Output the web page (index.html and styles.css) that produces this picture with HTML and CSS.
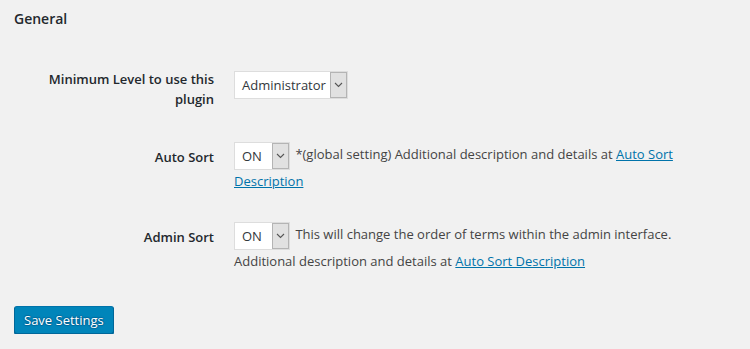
FILE: index.html
```html
<!DOCTYPE html>
<html>
<head>
<meta charset="utf-8">
<link rel="stylesheet" href="styles.css">
</head>
<body>
<div class="wrap">
  <h2 class="title">General</h2>
  <div class="form-table">
    <div class="row row-level">
      <div class="th">Minimum Level to use this plugin</div>
      <div class="td"><span class="select select-role">Administrator<span class="arrow"><svg width="9" height="6" viewBox="0 0 9 6"><path d="M1 1l3.5 3.5L8 1" fill="none" stroke="#555" stroke-width="1.1"/></svg></span></span></div>
    </div>
    <div class="row">
      <div class="th">Auto Sort</div>
      <div class="td"><span class="select select-onoff">ON<span class="arrow"><svg width="9" height="6" viewBox="0 0 9 6"><path d="M1 1l3.5 3.5L8 1" fill="none" stroke="#555" stroke-width="1.1"/></svg></span></span> *(global setting) Additional description and details at <a href="#">Auto Sort Description</a></div>
    </div>
    <div class="row">
      <div class="th">Admin Sort</div>
      <div class="td"><span class="select select-onoff">ON<span class="arrow"><svg width="9" height="6" viewBox="0 0 9 6"><path d="M1 1l3.5 3.5L8 1" fill="none" stroke="#555" stroke-width="1.1"/></svg></span></span> This will change the order of terms within the admin interface. Additional description and details at <a href="#">Auto Sort Description</a></div>
    </div>
  </div>
  <div class="submit">
    <button class="button-primary" type="button">Save Settings</button>
  </div>
</div>
</body>
</html>
```

FILE: styles.css
```css
html, body {
  margin: 0;
  padding: 0;
  background: #f1f1f1;
}
body {
  font-family: "Open Sans", "Noto Sans", sans-serif;
  font-size: 13px;
  color: #444;
}
.wrap {
  padding: 0 20px 0 14px;
}
.title {
  margin: 0;
  padding-top: 9px;
  font-size: 14px;
  line-height: 20px;
  font-weight: 600;
  color: #23282d;
}
.form-table {
  margin-top: 31px;
  display: flex;
  flex-direction: column;
}
.row {
  display: flex;
  align-items: flex-start;
}
.th {
  width: 200px;
  flex: none;
  padding: 20px 10px 15px 0;
  text-align: right;
  font-size: 13px;
  font-weight: 600;
  line-height: 20px;
  color: #23282d;
}
.row-level .th {
  padding-top: 9px;
  padding-bottom: 18px;
}
.td {
  flex: 1;
  padding: 15px 10px 15px;
  line-height: 22px;
  color: #444;
}
.row-level .td {
  padding-top: 11px;
}
a {
  color: #0073aa;
  text-decoration: underline;
}
.select {
  display: inline-flex;
  align-items: center;
  box-sizing: border-box;
  height: 28px;
  vertical-align: middle;
  margin: 0 2px 0 0;
  padding-left: 7px;
  background: #fff;
  border: 1px solid #ddd;
  color: #32373c;
  font-size: 13px;
  line-height: 26px;
  position: relative;
}
.select-role { width: 114px; }
.select-onoff { width: 56px; }
.arrow {
  position: absolute;
  right: 0;
  top: 0;
  bottom: 0;
  width: 17px;
  box-sizing: border-box;
  background: #e1e1e1;
  border: 1px solid #b4b4b4;
  display: flex;
  align-items: center;
  justify-content: center;
}
.submit {
  padding-top: 19px;
}
.button-primary {
  box-sizing: border-box;
  height: 28px;
  padding: 0 9px 1px;
  font-family: inherit;
  font-size: 13px;
  line-height: 26px;
  color: #fff;
  background: #0085ba;
  border: 1px solid #0073aa;
  border-color: #0073aa #006799 #006799;
  border-radius: 3px;
  box-shadow: 0 1px 0 #006799;
  text-shadow: 0 -1px 1px #006799, 1px 0 1px #006799, 0 1px 1px #006799, -1px 0 1px #006799;
  cursor: pointer;
}
```
